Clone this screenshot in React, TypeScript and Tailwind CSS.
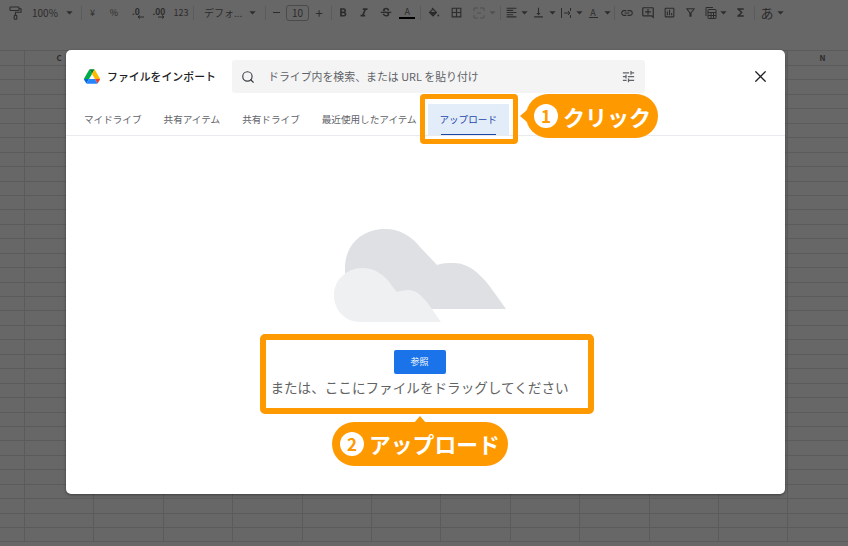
import React from 'react';
import { Search, X } from 'lucide-react';
import {
  MdArrowDropDown,
  MdBorderAll,
  MdFormatAlignLeft,
  MdFormatBold,
  MdFormatItalic,
  MdFunctions,
  MdLink,
  MdOutlineAddComment,
  MdOutlineFilterAlt,
  MdOutlineInsertChart,
  MdStrikethroughS,
  MdTune,
  MdVerticalAlignBottom,
} from 'react-icons/md';

const FONT = "font-['Noto_Sans_CJK_JP','Noto_Sans',sans-serif]";

const COLS = Array.from({ length: 13 }, (_, i) => i);
const ROWS = Array.from({ length: 33 }, (_, i) => i);
const TABS = ['マイドライブ', '共有アイテム', '共有ドライブ', '最近使用したアイテム'];

const Caret = ({ className = 'w-[12px]' }: { className?: string }) => (
  <span className={`flex shrink-0 justify-center ${className}`}>
    <MdArrowDropDown size={15} className="shrink-0" />
  </span>
);

const Sep = ({ className = 'mx-[6px]' }: { className?: string }) => (
  <span className={`h-[14px] w-px shrink-0 bg-[#5b5b5b] ${className}`} />
);

const Cell = ({ children, className = 'w-[21.5px]' }: { children: React.ReactNode; className?: string }) => (
  <span className={`flex shrink-0 items-center justify-center ${className}`}>{children}</span>
);

const Toolbar = () => (
  <div className="flex h-[25px] items-center pl-[4px] text-[9px] text-[#2c2c2c]">
    <Cell className="w-[22px]">
      <svg width="13" height="14" viewBox="0 0 13 14" fill="none" stroke="currentColor" strokeWidth="1.1">
        <rect x="1" y="1" width="9" height="3.5" rx="0.8" />
        <path d="M10 2.7h2v3.6H6.5v3" />
        <rect x="5.2" y="9.3" width="2.6" height="4" rx="0.6" />
      </svg>
    </Cell>
    <span className="w-[37px] pl-[6px] text-[10px]">100%</span>
    <Caret />
    <Sep className="ml-[6px]" />
    <Cell className="w-[21px]">¥</Cell>
    <Cell className="w-[22px]">%</Cell>
    <Cell className="w-[22px]">
      <span className="flex flex-col items-end leading-none">
        <span className="text-[8.5px] font-bold leading-[8px]">.0</span>
        <svg width="7" height="4" viewBox="0 0 7 4" fill="none" stroke="currentColor" className="-mr-[4px]">
          <path d="M7 2H1M3 0.5L1 2l2 1.5" />
        </svg>
      </span>
    </Cell>
    <Cell className="w-[24px]">
      <span className="flex flex-col items-end leading-none">
        <span className="text-[8.5px] font-bold leading-[8px]">.00</span>
        <svg width="7" height="4" viewBox="0 0 7 4" fill="none" stroke="currentColor">
          <path d="M0 2h6M4 0.5L6 2 4 3.5" />
        </svg>
      </span>
    </Cell>
    <Cell className="w-[20px]">123</Cell>
    <Sep className="ml-[2px] mr-[10px]" />
    <span className="w-[42px] shrink-0 text-[10px]">デフォ...</span>
    <Caret />
    <Sep className="ml-[7px] mr-[1px]" />
    <Cell className="w-[19px]">
      <span className="h-px w-[7px] bg-[#2c2c2c]" />
    </Cell>
    <span className="flex h-[16px] w-[23px] shrink-0 items-center justify-center rounded-[3px] border border-[#4a4a4a] text-[10px]">10</span>
    <Cell className="w-[20px]">
      <span className="text-[13px]">+</span>
    </Cell>
    <Sep className="ml-[2px] mr-0" />
    <Cell>
      <MdFormatBold size={14} />
    </Cell>
    <Cell>
      <MdFormatItalic size={14} />
    </Cell>
    <Cell>
      <MdStrikethroughS size={14} />
    </Cell>
    <Cell>
      <span className="flex flex-col items-center leading-none">
        <span className="text-[9px] leading-[10px]">A</span>
        <span className="h-[2px] w-[16px] bg-black" />
      </span>
    </Cell>
    <Sep className="ml-[2px] mr-[2px]" />
    <Cell>
      <svg width="12" height="12" viewBox="0 0 12 12" fill="none" stroke="currentColor" strokeWidth="1.1">
        <path d="M4 1l4.5 4.5L5 9 1.5 5.5 5 2" />
        <path d="M2 5.5h6" />
        <path d="M2 5.8l3 3 3.2-3.2z" fill="currentColor" stroke="none" />
        <circle cx="10.3" cy="8.5" r="0.9" fill="currentColor" stroke="none" />
      </svg>
    </Cell>
    <Cell className="w-[24px]">
      <MdBorderAll size={13} />
    </Cell>
    <Cell className="w-[20px]">
      <svg width="12" height="12" viewBox="0 0 12 12" fill="none" stroke="#505050" strokeWidth="1">
        <path d="M1 4V1h4M7 1h4v3M1 8v3h4M7 11h4V8M4 6h4" />
      </svg>
    </Cell>
    <span className="text-[#505050]">
      <Caret className="w-[8px]" />
    </span>
    <Sep className="ml-[3px] mr-[3px]" />
    <Cell className="w-[15px]">
      <MdFormatAlignLeft size={13} />
    </Cell>
    <Caret className="w-[11px]" />
    <Cell className="w-[17px]">
      <MdVerticalAlignBottom size={13} />
    </Cell>
    <Caret className="w-[11px]" />
    <Cell className="w-[16px]">
      <svg width="12" height="12" viewBox="0 0 12 12" fill="none" stroke="currentColor" strokeWidth="1">
        <path d="M1.5 1v10M10.5 1v3M10.5 8v3M4 6h6M8 4l2 2-2 2" />
      </svg>
    </Cell>
    <Caret className="w-[11px]" />
    <Cell className="w-[17px]">
      <span className="flex flex-col items-center leading-none">
        <span className="text-[9px] leading-[9px]">A</span>
        <span className="h-px w-[9px] bg-[#2c2c2c]" />
      </span>
    </Cell>
    <Caret className="w-[11px]" />
    <Sep className="ml-[1px] mr-[1px]" />
    <Cell className="w-[22px]">
      <MdLink size={14} />
    </Cell>
    <Cell>
      <MdOutlineAddComment size={14} />
    </Cell>
    <Cell>
      <MdOutlineInsertChart size={13} />
    </Cell>
    <Cell className="w-[20px]">
      <MdOutlineFilterAlt size={13} />
    </Cell>
    <Cell className="w-[20px]">
      <svg width="12" height="13" viewBox="0 0 12 13" fill="none" stroke="currentColor" strokeWidth="1">
        <rect x="3" y="3.5" width="8" height="9" rx="0.5" />
        <path d="M3 6.5h8M3 9.5h8M6 6.5v6M8.5 6.5v6M1 10V1.5h7" />
      </svg>
    </Cell>
    <Caret className="w-[6px]" />
    <Cell className="w-[27px]">
      <MdFunctions size={13} />
    </Cell>
    <Sep className="mx-0 mr-[3px]" />
    <Cell className="w-[19px]">
      <span className={`${FONT} text-[13px]`}>あ</span>
    </Cell>
    <Caret className="w-[8px]" />
  </div>
);

// the dimmed spreadsheet behind the dialog
const SheetGrid = () => (
  <div className="flex flex-col">
    <div className="flex h-[16px] border-y border-[#5b5b5b] text-[8px] font-bold text-[#2c2c2c]">
      <div className="w-[24px] shrink-0" />
      {COLS.map((c) => (
        <div key={c} className="flex w-[69.4px] shrink-0 items-center justify-center border-l border-[#5b5b5b]">
          {c === 0 ? 'C' : c === 11 ? 'N' : ''}
        </div>
      ))}
    </div>
    {ROWS.map((r) => (
      <div key={r} className="flex h-[14.45px] shrink-0 border-b border-[#5b5b5b]">
        <div className="w-[24px] shrink-0" />
        {COLS.map((c) => (
          <div key={c} className="w-[69.4px] shrink-0 border-l border-[#5b5b5b]" />
        ))}
      </div>
    ))}
  </div>
);

const DriveLogo = () => (
  <svg width="16" height="15" viewBox="0 0 87.3 78">
    <path d="m6.6 66.85 3.85 6.65c.8 1.4 1.95 2.5 3.3 3.3l13.75-23.8h-27.5c0 1.55.4 3.1 1.2 4.5z" fill="#0066da" />
    <path d="m43.65 25-13.75-23.8c-1.35.8-2.5 1.9-3.3 3.3l-25.4 44a9.06 9.06 0 0 0 -1.2 4.5h27.5z" fill="#00ac47" />
    <path d="m73.55 76.8c1.35-.8 2.5-1.9 3.3-3.3l1.6-2.75 7.65-13.25c.8-1.4 1.2-2.95 1.2-4.5h-27.502l5.852 11.5z" fill="#ea4335" />
    <path d="m43.65 25 13.75-23.8c-1.35-.8-2.9-1.2-4.5-1.2h-18.5c-1.6 0-3.15.45-4.5 1.2z" fill="#00832d" />
    <path d="m59.8 53h-32.3l-13.75 23.8c1.35.8 2.9 1.2 4.5 1.2h50.8c1.6 0 3.15-.45 4.5-1.2z" fill="#2684fc" />
    <path d="m73.4 26.5-12.7-22c-.8-1.4-1.95-2.5-3.3-3.3l-13.75 23.8 16.15 28h27.45c0-1.55-.4-3.1-1.2-4.5z" fill="#ffba00" />
  </svg>
);

const Clouds = () => (
  <svg width="180" height="100" viewBox="330 225 180 100">
    <path
      d="M345 309V268C345 245 362 229 385 229C400 229 411 236 420 247L437 265C443 263 447 263 453 263C475 263 487 282 506 309Z"
      fill="#dfe0e4"
    />
    <path
      d="M360 322C345 322 334 310 334 295C334 280 347 268 362 268C375 268 385 275 392 286L397 292C401 291 404 290 408 290C420 290 428 303 441 322Z"
      fill="#eff0f2"
    />
  </svg>
);

const Dialog = () => (
  <div className="absolute left-[66px] top-[50px] flex h-[444px] w-[719px] flex-col rounded-[5px] bg-white shadow-[0_1px_3px_rgba(0,0,0,0.4)]">
    <div className="flex items-center pl-[18px] pt-[10px]">
      <DriveLogo />
      <span className="ml-[7px] w-[125px] text-[10.9px] font-medium text-[#202124]">ファイルをインポート</span>
      <div className="flex h-[33px] w-[413px] items-center rounded-[3px] bg-[#f4f4f4] pl-[9px] pr-[9px]">
        <Search size={14} className="text-[#3c4043]" />
        <span className="ml-[13px] flex-1 text-[10.9px] text-[#5f6368]">ドライブ内を検索、または URL を貼り付け</span>
        <MdTune size={15} className="text-[#5f6368]" />
      </div>
      <X size={19} strokeWidth={1.6} className="ml-[105.5px] text-[#202124]" />
    </div>
    <div className="mt-[11px] flex h-[32px] items-stretch border-b border-[#e8eaed] pl-[18px] text-[9.6px] text-[#5f6368]">
      <div className="flex gap-[22px]">
        {TABS.map((t) => (
          <span key={t} className="flex items-center">
            {t}
          </span>
        ))}
      </div>
      <div className="relative ml-[11px] flex w-[81px] items-center justify-center bg-[#e3edf9] text-[#1a47a8]">
        アップロード
        <span className="absolute bottom-0 left-[13px] h-[1px] w-[55px] bg-[#1a47a8]" />
      </div>
    </div>
    <div className="flex flex-1 flex-col items-center pr-[12px] pt-[89px]">
      <div className="ml-[1px]">
        <Clouds />
      </div>
      <button className="mt-[25px] h-[24px] w-[52px] rounded-[2px] bg-[#1a73e8] text-[9px] text-white">参照</button>
      <p className="mt-[2px] text-[13.6px] leading-[22px] text-[#636363]">または、ここにファイルをドラッグしてください</p>
    </div>
  </div>
);

// orange annotations laid over the screenshot
const Callouts = () => (
  <>
    <div className="absolute left-[420px] top-[94px] h-[50px] w-[98px] rounded-[4px] border-[5px] border-[#ff9900]" />
    <div className="absolute left-[520px] top-[110px] h-0 w-0 border-y-[6px] border-r-[7px] border-y-transparent border-r-[#ff9900]" />
    <div className="absolute left-[526px] top-[94px] flex h-[44px] w-[132px] items-center rounded-[22px] bg-[#ff9900] pl-[8px] text-white">
      <span className="flex h-[24px] w-[24px] items-center justify-center rounded-full bg-white text-[17px] font-bold text-[#ff9900]">1</span>
      <span className="ml-[5px] text-[22px] font-bold leading-none">クリック</span>
    </div>
    <div className="absolute left-[260px] top-[334px] h-[80px] w-[334px] rounded-[5px] border-[6px] border-[#ff9900]" />
    <div className="absolute left-[414px] top-[416px] h-0 w-0 border-x-[6px] border-b-[7px] border-x-transparent border-b-[#ff9900]" />
    <div className="absolute left-[332px] top-[422px] flex h-[44px] w-[176px] items-center rounded-[22px] bg-[#ff9900] pl-[8px] text-white">
      <span className="flex h-[24px] w-[24px] items-center justify-center rounded-full bg-white text-[17px] font-bold text-[#ff9900]">2</span>
      <span className="ml-[5px] text-[21.8px] font-bold leading-none">アップロード</span>
    </div>
  </>
);

export default function App() {
  return (
    <div className={`relative h-[546px] w-[848px] overflow-hidden bg-[#676767] ${FONT}`}>
      <Toolbar />
      <div className="h-[25px]" />
      <SheetGrid />
      <Dialog />
      <Callouts />
    </div>
  );
}
